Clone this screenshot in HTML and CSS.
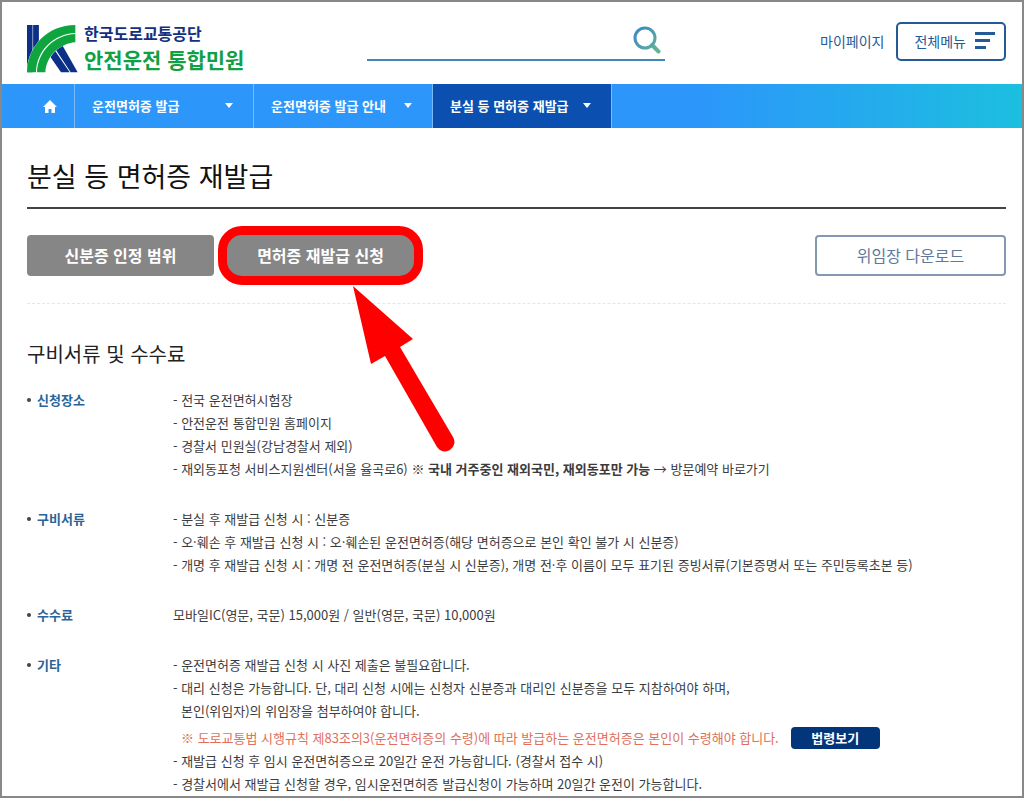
FILE: index.html
```html
<!DOCTYPE html>
<html lang="ko">
<head>
<meta charset="utf-8">
<meta name="viewport" content="width=device-width, initial-scale=1">
<title>분실 등 면허증 재발급</title>
<link rel="stylesheet" href="styles.css">
</head>
<body>
<div class="page">
  <header class="header">
    <a class="logo" href="#">
      <svg class="logo-mark" viewBox="0 0 153 144" aria-hidden="true">
        <path fill="#0c2f87" d="M0 0H16V142H0zM19 0H35V80H19z"/>
        <path fill="#0c2f87" d="M62 84L78 68L128 142H102zM81 66L100 50L152 142H131z"/>
        <path fill="#fff" d="M0 142V128C8 58 65 0 145 0V52C98 56 60 92 57 142z"/>
        <path fill="#0c2f87" d="M0 0H16V72Q6 88 0 108zM19 0H35V46Q26 55 19 66z"/>
        <path fill="#0ea53f" d="M0 142C2 65 60 0 145 0V24C80 27 29 75 27 142z"/>
        <path fill="#0ea53f" d="M30 142C33 78 82 30 145 27V52C98 56 58 92 55 142z"/>
      </svg>
      <span class="logo-text">
        <span class="logo-org">한국도로교통공단</span>
        <span class="logo-name">안전운전 통합민원</span>
      </span>
    </a>
    <form class="search">
      <input class="search-input" type="text" aria-label="검색어">
      <button class="search-button" type="button" aria-label="검색">
        <svg viewBox="0 0 28 28" width="28" height="28" aria-hidden="true">
          <defs>
            <linearGradient id="lens" gradientUnits="userSpaceOnUse" x1="2" y1="2" x2="26" y2="26">
              <stop offset="0" stop-color="#3a87c5"/>
              <stop offset="1" stop-color="#62b795"/>
            </linearGradient>
          </defs>
          <g fill="none" stroke="url(#lens)">
            <circle cx="12" cy="12" r="10" stroke-width="3"/>
            <path d="M19 19L25.500 25.500" stroke-width="4" stroke-linecap="round"/>
          </g>
        </svg>
      </button>
    </form>
    <div class="tools">
      <a class="mypage" href="#">마이페이지</a>
      <button class="all-menu" type="button">전체메뉴
        <svg viewBox="0 0 20 18" width="20" height="18" aria-hidden="true"><path fill="#245a95" d="M0 0H20V3H0zM0 7H15V10H0zM0 14H11V17H0z"/></svg>
      </button>
    </div>
  </header>

  <nav class="nav" aria-label="현재 위치">
    <a class="nav-home" href="#" aria-label="홈">
      <svg viewBox="0 0 14 13" width="14" height="13" aria-hidden="true"><path fill="#fff" d="M7 0L14 7H12V13H8.500V9H5.500V13H2V7H0z"/></svg>
    </a>
    <button class="nav-item" type="button">운전면허증 발급<span class="caret"></span></button>
    <button class="nav-item" type="button">운전면허증 발급 안내<span class="caret"></span></button>
    <button class="nav-item nav-current" type="button">분실 등 면허증 재발급<span class="caret"></span></button>
  </nav>

  <main class="main">
    <h1 class="title">분실 등 면허증 재발급</h1>
    <div class="actions">
      <button class="action" type="button">신분증 인정 범위</button>
      <div class="marked">
        <button class="action" type="button">면허증 재발급 신청</button>
        <span class="ring"></span>
        <svg class="arrow" viewBox="0 0 102 168" aria-hidden="true">
          <path fill="#f00" d="M0 0L60 53L47 61L100 151A9 9 0 0 1 84 161L32 70L18 78z"/>
        </svg>
      </div>
      <button class="download" type="button">위임장 다운로드</button>
    </div>

    <h2 class="subtitle">구비서류 및 수수료</h2>
    <dl class="details">
      <dt>신청장소</dt>
      <dd>
        <p>- 전국 운전면허시험장</p>
        <p>- 안전운전 통합민원 홈페이지</p>
        <p>- 경찰서 민원실(강남경찰서 제외)</p>
        <p>- 재외동포청 서비스지원센터(서울 율곡로6) ※ <strong>국내 거주중인 재외국민, 재외동포만 가능</strong> <a class="plain" href="#">→ 방문예약 바로가기</a></p>
      </dd>
      <dt>구비서류</dt>
      <dd>
        <p>- 분실 후 재발급 신청 시 : 신분증</p>
        <p>- 오·훼손 후 재발급 신청 시 : 오·훼손된 운전면허증(해당 면허증으로 본인 확인 불가 시 신분증)</p>
        <p>- 개명 후 재발급 신청 시 : 개명 전 운전면허증(분실 시 신분증), 개명 전·후 이름이 모두 표기된 증빙서류(기본증명서 또는 주민등록초본 등)</p>
      </dd>
      <dt>수수료</dt>
      <dd>
        <p>모바일IC(영문, 국문) 15,000원 / 일반(영문, 국문) 10,000원</p>
      </dd>
      <dt>기타</dt>
      <dd>
        <p>- 운전면허증 재발급 신청 시 사진 제출은 불필요합니다.</p>
        <p>- 대리 신청은 가능합니다. 단, 대리 신청 시에는 신청자 신분증과 대리인 신분증을 모두 지참하여야 하며,</p>
        <p class="indent">본인(위임자)의 위임장을 첨부하여야 합니다.</p>
        <p class="indent notice">※ 도로교통법 시행규칙 제83조의3(운전면허증의 수령)에 따라 발급하는 운전면허증은 본인이 수령해야 합니다. <button class="law" type="button">법령보기</button></p>
        <p>- 재발급 신청 후 임시 운전면허증으로 20일간 운전 가능합니다. (경찰서 접수 시)</p>
        <p>- 경찰서에서 재발급 신청할 경우, 임시운전면허증 발급신청이 가능하며 20일간 운전이 가능합니다.</p>
      </dd>
    </dl>
  </main>
</div>
</body>
</html>
```
FILE: styles.css
```css
* { box-sizing: border-box; }
body, h1, h2, dl, dd, p { margin: 0; }
body {
  font-family: "Noto Sans CJK KR", sans-serif;
  font-size: 13px;
  line-height: 23px;
  color: #3c3c3c;
  background: #fff;
}
button, input { font: inherit; margin: 0; padding: 0; border: 0; background: none; }
button { cursor: pointer; white-space: nowrap; }
a { color: inherit; text-decoration: none; }
svg { display: block; flex: none; }

.page { min-height: 100vh; border: 2px solid #888; }

.header { display: flex; align-items: center; height: 82px; padding: 0 16px 4px 25px; }
.logo { display: flex; gap: 6px; align-items: flex-end; width: 215px; padding-top: 12px; }
.logo-mark { width: 51px; height: 48px; }
.logo-text { display: flex; flex-direction: column; font-weight: 700; white-space: nowrap; }
.logo-org { font-size: 16px; line-height: 24px; color: #12307f; }
.logo-name { font-size: 21px; line-height: 28px; color: #12a045; }

.search {
  display: flex;
  align-items: center;
  flex: 0 1 298px;
  height: 40px;
  margin-left: 125px;
  padding-right: 4px;
  border-bottom: 2px solid #4386ba;
}
.search-input { flex: 1; min-width: 0; height: 32px; outline: none; }

.tools { display: flex; align-items: center; gap: 12px; margin-left: auto; font-size: 14px; color: #245a95; }
.all-menu {
  display: flex;
  align-items: center;
  gap: 9px;
  height: 39px;
  padding: 0 9px 0 16px;
  border: 2px solid #245a95;
  border-radius: 5px;
  color: #245a95;
}

.nav { display: flex; height: 44px; background: linear-gradient(90deg, #2c96fb 68%, #1cbfdf); }
.nav-home { display: flex; align-items: center; justify-content: flex-end; width: 73px; padding-right: 17px; border-right: 1px solid #79bbfb; }
.nav-item {
  display: flex;
  align-items: center;
  justify-content: space-between;
  width: 179px;
  padding: 0 20px 2px 17px;
  border-right: 1px solid #79bbfb;
  color: #fff;
  font-weight: 700;
}
.nav-current { background: #0b50b1; }
.caret { border: 4px solid transparent; border-top: 5px solid #fff; border-bottom: 0; }

.main { padding: 28px 16px 0 25px; }
.title {
  padding-bottom: 11px;
  border-bottom: 2px solid #444;
  font-size: 27px;
  line-height: 40px;
  font-weight: 400;
  color: #111;
}
.actions { display: flex; gap: 13px; padding: 26px 0 27px; border-bottom: 1px dashed #e6e6e6; font-size: 16px; }
.action { width: 187px; height: 41px; border-radius: 4px; background: #868686; color: #fff; font-weight: 700; }
.marked { position: relative; }
.ring { position: absolute; inset: -9px; border: 9px solid #f00; border-radius: 24px; pointer-events: none; }
.arrow { position: absolute; left: 126px; top: 51px; width: 102px; height: 168px; pointer-events: none; }
.download { width: 191px; height: 41px; margin-left: auto; border: 2px solid #8399b1; border-radius: 4px; color: #60789a; }

.subtitle { margin: 35px 0 19px; font-size: 20px; line-height: 30px; font-weight: 400; color: #222; }
.details { display: grid; grid-template-columns: 146px 1fr; row-gap: 27px; }
.details dt { display: flex; align-items: center; gap: 6px; height: 23px; font-weight: 700; color: #2c6496; }
.details dt::before { content: ""; width: 4px; height: 4px; border-radius: 50%; background: #444; }
.indent { padding-left: 8px; }
.notice { display: flex; align-items: center; gap: 12px; margin-top: 4px; color: #e0705c; }
.law { width: 89px; height: 22px; border-radius: 4px; background: #03357b; color: #fff; font-weight: 700; line-height: 20px; }
```
